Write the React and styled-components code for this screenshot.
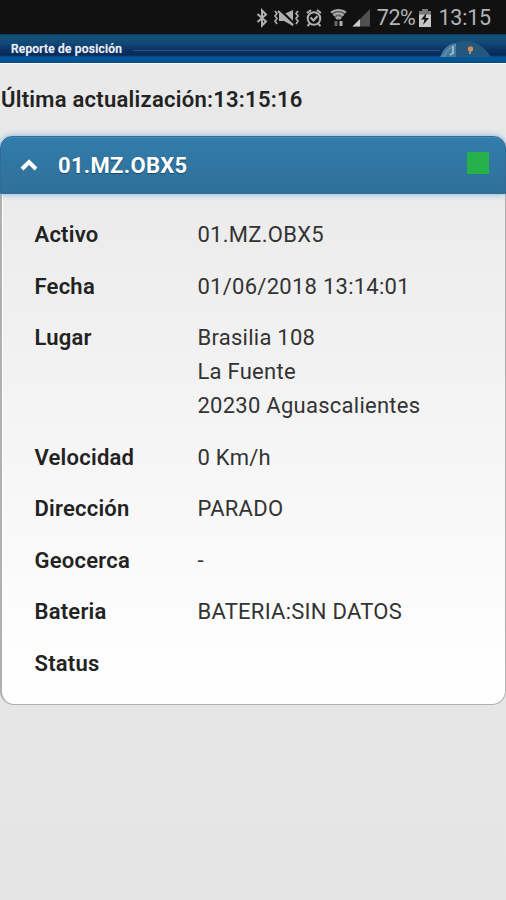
import React from 'react';
import styled, { createGlobalStyle } from 'styled-components';

const GlobalStyle = createGlobalStyle`
  * { box-sizing: border-box; }
  html, body { margin: 0; padding: 0; background: #e7e7e7; }
  body { font-family: Roboto, "Liberation Sans", sans-serif; color: #222; overflow: hidden; }
`;

const Screen = styled.div`
  display: flex;
  flex-direction: column;
  width: 506px;
  height: 900px;
  overflow: hidden;
  background: linear-gradient(#e9e9e9, #e5e5e5);
`;

const StatusBar = styled.header`
  display: flex;
  flex: none;
  align-items: center;
  justify-content: flex-end;
  height: 34px;
  padding: 2px 15px 0 0;
  background: #111;
  color: #b4b4b4;
  font-size: 21.5px;
`;

const StatusIcons = styled.svg`
  width: 116px;
  height: 24px;
  margin: 0 6px 2px 0;
`;

const BatteryIcon = styled.svg`
  width: 12px;
  height: 18px;
  margin: 0 7px 0 4px;
`;

const StatusText = styled.span`
  line-height: 32px;
  letter-spacing: ${(p) => p.$tracking};
`;

const Banner = styled.div`
  display: flex;
  flex: none;
  align-items: center;
  height: 30px;
  padding: 0 15px 3px 11px;
  background: linear-gradient(#063a5e 0, #145079 2px, #124975 9px, #0c3262 16px, #0a2858 21px, #00559a 23px, #015895 26px, #07477b 29px, #fafafa 29.5px, #f2f2f2 30px);
`;

const BannerTitle = styled.h1`
  margin: 2px 11px 0 0;
  color: #e8eef5;
  font: 500 12px/20px Roboto, sans-serif;
  letter-spacing: 0.2px;
  text-shadow: 0 0 1px #b5c8dd;
  white-space: nowrap;
`;

const BannerRule = styled.div`
  flex: 1;
  height: 1px;
  margin-top: 6px;
  background: #2c5487;
`;

const BannerEmblem = styled.svg`
  flex: none;
  width: 51px;
  height: 17px;
  margin-top: 1px;
`;

const Updated = styled.p`
  flex: none;
  margin: 19px 0 20px 1px;
  font-size: 22px;
  font-weight: 600;
  line-height: 33px;
  letter-spacing: 0.26px;
  white-space: nowrap;
`;

const Card = styled.section`
  flex: none;
  display: flex;
  flex-direction: column;
  height: 569px;
  border-radius: 12px;
`;

const CardHeader = styled.div`
  display: flex;
  flex: none;
  align-items: center;
  position: relative;
  height: 58px;
  padding: 0 16px 0 19px;
  background: linear-gradient(#327cab, #2f7099);
  border: 1px solid #2f6d97;
  border-radius: 12px 12px 0 0;
  box-shadow: 0 0 6px #7fb0e0, inset 0 2px 1px -1px #4a8cb8;
`;

const Chevron = styled.svg`
  width: 18px;
  height: 14px;
  margin-right: 20px;
`;

const CardTitle = styled.h2`
  flex: 1;
  margin: 2px 0 0;
  color: #fff;
  font-size: 22px;
  font-weight: 700;
  line-height: 34px;
  letter-spacing: 0.3px;
  text-shadow: 0 1px 1px #14496b;
`;

const StateLight = styled.span`
  width: 22px;
  height: 22px;
  margin-top: -4px;
  background: #25b24b;
`;

const CardBody = styled.dl`
  flex: 1;
  display: flex;
  flex-direction: column;
  gap: 17.55px;
  margin: 0;
  padding: 24.1px 0 0 32.5px;
  background: linear-gradient(#ebebeb, #fefefe 92%);
  border: 1px solid #b0b0b0;
  border-width: 0 1px 1.5px 2px;
  border-radius: 0 0 14px 14px;
  box-shadow: inset 1px -1px 0 #fff;
`;

const Row = styled.div`
  display: grid;
  grid-template-columns: 163px 1fr;
  font-size: 22px;
  line-height: 34px;
`;

const Label = styled.dt`
  font-weight: 600;
  letter-spacing: 0.23px;
`;

const Value = styled.dd`
  margin: 0;
  font-weight: 400;
  color: #333;
  letter-spacing: 0.26px;
`;

const Line = styled.span`
  display: block;
  white-space: nowrap;
`;

const rows = [
  { label: 'Activo', lines: ['01.MZ.OBX5'] },
  { label: 'Fecha', lines: ['01/06/2018 13:14:01'] },
  { label: 'Lugar', lines: ['Brasilia 108', 'La Fuente', '20230 Aguascalientes'] },
  { label: 'Velocidad', lines: ['0 Km/h'] },
  { label: 'Dirección', lines: ['PARADO'] },
  { label: 'Geocerca', lines: ['-'] },
  { label: 'Bateria', lines: ['BATERIA:SIN DATOS'] },
  { label: 'Status', lines: [] },
];

function SystemIcons() {
  return (
    <StatusIcons viewBox="0 0 116 24" fill="none" stroke="#b0b0b0" strokeWidth="1.8">
      <path d="m2.500 9 8.500 7.500-4 4v-15l4 4-8.500 7.500" strokeWidth="2" />
      <path d="m20 6 2 2.500-2 2.500 2 2.500-2 2.500 2 3M43 6l-2 2.500 2 2.500-2 2.500 2 2.500-2 3" strokeWidth="1.6" />
      <path d="M24 9h5l9-4v16l-9-5h-5z" fill="#b0b0b0" stroke="none" />
      <path d="m25 5 14 14" stroke="#111" strokeWidth="3" />
      <path d="m23 6 15 14" strokeWidth="2.2" />
      <circle cx="59" cy="13.500" r="6.3" strokeWidth="2" />
      <path d="m52 8 4-3m6 0 4 3M55.500 12.500l3 3 4-4.500M54.500 19l-2 2m11-2 2 2" strokeWidth="2" />
      <path d="M76 7c4-3.500 11-3.500 15 0l-6 8h-3z" fill="#666" stroke="none" />
      <path d="M76 7.500c4-3.500 11-3.500 15 0M78.500 10.500c3-2.500 7-2.500 10 0M81 13.500c1.500-1.500 3.500-1.500 5 0" />
      <path d="M81 16v5" stroke="#666" strokeWidth="3" />
      <path d="M86 16v5" strokeWidth="3" />
      <path d="M115 4v17.500H97.500z" fill="#505050" stroke="none" />
      <path d="M105 14v7.500H97.500z" fill="#ccc" stroke="none" />
    </StatusIcons>
  );
}

export default function App() {
  return (
    <>
      <GlobalStyle />
      <Screen>
        <StatusBar>
          <SystemIcons />
          <StatusText $tracking="-0.4px">72%</StatusText>
          <BatteryIcon viewBox="0 0 12 18">
            <path d="M3.500 0h5v2H12v16H0V2h3.500z" fill="#c6c6c6" />
            <path d="M0 2h3.500V0h5v2H12v3.500H0z" fill="#777" />
            <path d="M7.500 4 2 10.500h3.500L4 16l6-7H6.500z" fill="#151515" />
          </BatteryIcon>
          <StatusText $tracking="-0.2px">13:15</StatusText>
        </StatusBar>
        <Banner>
          <BannerTitle>Reporte de posición</BannerTitle>
          <BannerRule />
          <BannerEmblem viewBox="0 0 51 17">
            <path d="M0 17C3 9 8 4 16 3v14z" fill="#477b9e" />
            <path d="M16 17V3c6-4 24-4 35 14z" fill="#24577d" />
            <path d="M4 17C6 11 10 7 16 5" stroke="#76a2b8" fill="none" />
            <path d="M13 6v7l-3 2" stroke="#bac9d8" strokeWidth="1.5" fill="none" />
            <path d="M30 11v3" stroke="#7198b0" strokeWidth="2" />
            <circle cx="30.500" cy="9" r="2.700" fill="#d88b51" />
          </BannerEmblem>
        </Banner>
        <Updated>Última actualización:13:15:16</Updated>
        <Card>
          <CardHeader>
            <Chevron viewBox="0 0 18 14">
              <path d="m2 11 7-7 7 7" fill="none" stroke="#fff" strokeWidth="4" />
            </Chevron>
            <CardTitle>01.MZ.OBX5</CardTitle>
            <StateLight />
          </CardHeader>
          <CardBody>
            {rows.map((row) => (
              <Row key={row.label}>
                <Label>{row.label}</Label>
                <Value>
                  {row.lines.map((line) => (
                    <Line key={line}>{line}</Line>
                  ))}
                </Value>
              </Row>
            ))}
          </CardBody>
        </Card>
      </Screen>
    </>
  );
}
